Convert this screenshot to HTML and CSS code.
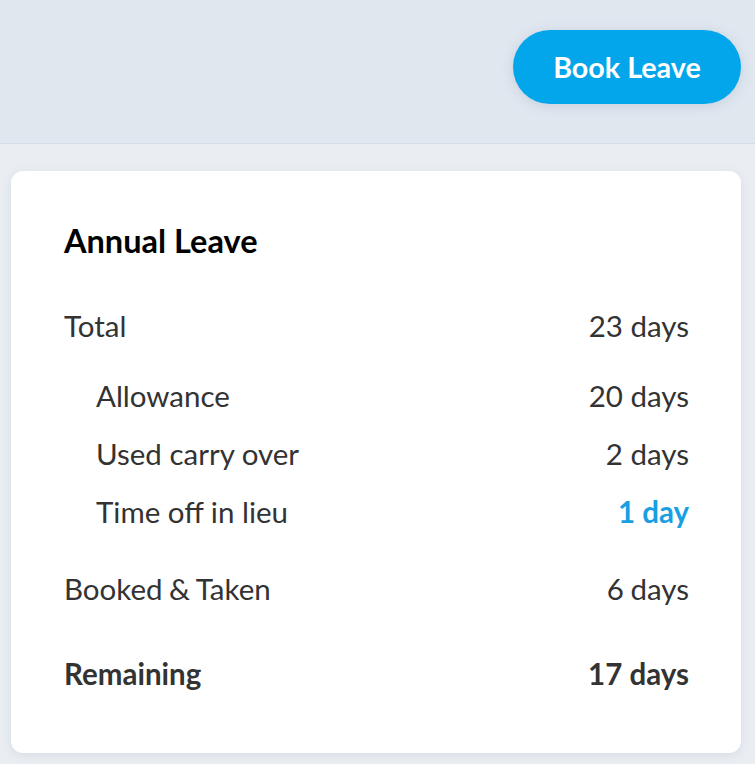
FILE: index.html
```html
<!DOCTYPE html>
<html lang="en">
<head>
<meta charset="utf-8">
<title>Annual Leave</title>
<link rel="stylesheet" href="styles.css">
</head>
<body>
<header class="topbar">
  <button class="book-btn" type="button">Book Leave</button>
</header>
<main class="content">
  <section class="card">
    <h1 class="card-title">Annual Leave</h1>
    <div class="row row-total"><span>Total</span><span>23 days</span></div>
    <div class="group">
      <div class="row sub"><span>Allowance</span><span>20 days</span></div>
      <div class="row sub"><span>Used carry over</span><span>2 days</span></div>
      <div class="row sub"><span>Time off in lieu</span><span class="accent">1 day</span></div>
    </div>
    <div class="row row-booked"><span>Booked &amp; Taken</span><span>6 days</span></div>
    <div class="row row-remaining"><span>Remaining</span><span>17 days</span></div>
  </section>
</main>
</body>
</html>
```
FILE: styles.css
```css
html, body {
  margin: 0;
  padding: 0;
}
body {
  font-family: Lato, "Open Sans", sans-serif;
  background: #eaeef3;
  color: #333333;
  height: 764px;
  overflow: hidden;
}
.topbar {
  height: 144px;
  box-sizing: border-box;
  background: #e0e7ef;
  border-bottom: 1px solid #d6dde6;
  display: flex;
  justify-content: flex-end;
  align-items: flex-start;
  padding: 30px 14px 0 0;
}
.book-btn {
  height: 74px;
  width: 228px;
  border: none;
  border-radius: 37px;
  background: #03a6ea;
  color: #ffffff;
  font-family: Lato, sans-serif;
  font-weight: 700;
  font-size: 28.7px;
  box-shadow: 0 2px 12px rgba(120, 140, 170, 0.25);
  cursor: pointer;
  padding: 0;
}
.content {
  padding: 27px 14px 0 11px;
}
.card {
  background: #ffffff;
  border-radius: 12px;
  box-shadow: 0 2px 10px rgba(120, 140, 170, 0.18);
  padding: 52px 52px 50px 53px;
}
.card-title {
  margin: 0 0 38px 0;
  font-size: 32.5px;
  line-height: 36px;
  font-weight: 700;
  color: #000000;
}
.row {
  display: flex;
  justify-content: space-between;
  font-size: 29.5px;
  line-height: 58px;
}
.group {
  margin: 12px 0 19px 0;
}
.sub {
  padding-left: 32px;
}
.accent {
  color: #1a9fe2;
  font-weight: 700;
}
.row-booked {
  word-spacing: -1px;
}
.row-remaining {
  margin-top: 27px;
  font-weight: 700;
}
```
